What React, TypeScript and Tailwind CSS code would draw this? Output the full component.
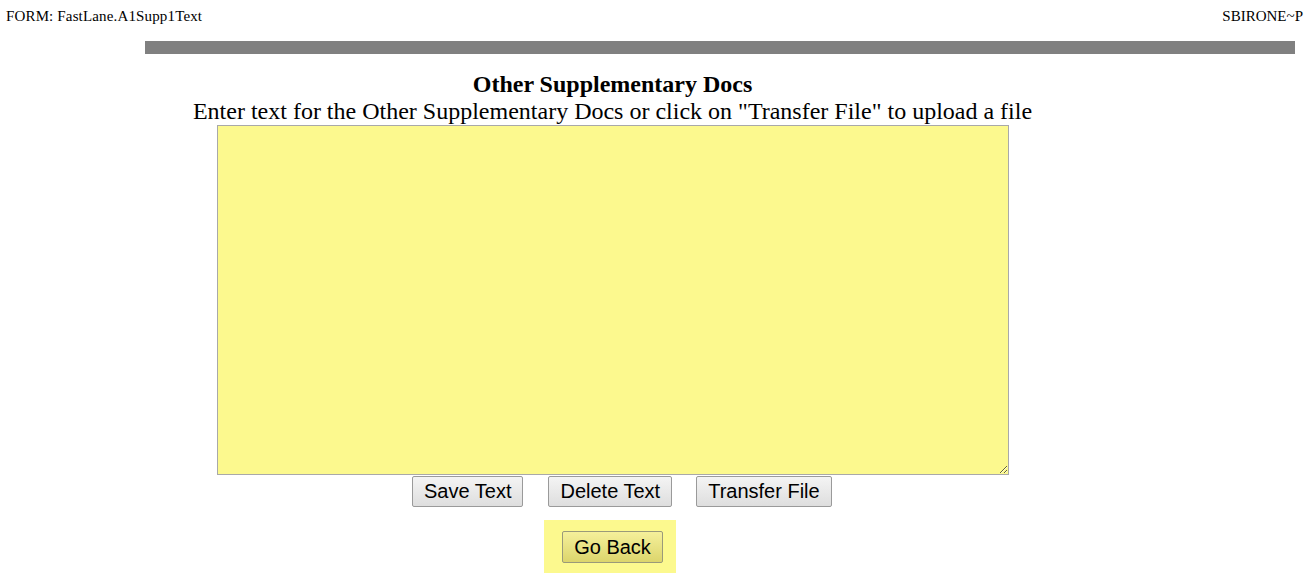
export default function App() {
  return (
    <div className="w-[1305px] h-[573px] overflow-hidden bg-white text-black font-['Liberation_Serif',serif]">
      {/* header line */}
      <div className="flex items-start h-[41px] pt-[8px] text-[15px] leading-[17px]">
        <span className="pl-[6px] whitespace-nowrap tracking-[0.15px]">FORM: FastLane.A1Supp1Text</span>
        <span className="ml-auto whitespace-nowrap pr-[2px]">SBIRONE~P</span>
      </div>
      <div className="ml-[145px] w-[1150px] h-[13px] bg-[#808080]" />

      <div className="w-[1225px] flex flex-col items-center">
        <h1 className="mt-[17px] text-[24px] leading-[27px] font-bold">Other Supplementary Docs</h1>
        <p className="text-[24px] leading-[27px] whitespace-nowrap">
          Enter text for the Other Supplementary Docs or click on "Transfer File" to upload a file
        </p>
        <textarea className="w-[792px] h-[350px] bg-[#fcf98e] border border-[#a9a9a9] resize-y block outline-none" />
      </div>

      <div className="flex pl-[412px] gap-[25px] mt-[1px] font-['Liberation_Sans',Arial,sans-serif] text-[20px]">
        <button className="h-[31px] px-[11px] border border-[#9a9a9a] rounded-[2px] bg-gradient-to-b from-[#f4f4f4] to-[#dedede] leading-[29px]">Save Text</button>
        <button className="h-[31px] px-[11px] border border-[#9a9a9a] rounded-[2px] bg-gradient-to-b from-[#f4f4f4] to-[#dedede] leading-[29px]">Delete Text</button>
        <button className="-ml-[1px] h-[31px] px-[11px] border border-[#9a9a9a] rounded-[2px] bg-gradient-to-b from-[#f4f4f4] to-[#dedede] leading-[29px]">Transfer File</button>
      </div>

      <div className="ml-[544px] mt-[13px] w-[132px] h-[53px] bg-[#fcf98e] pt-[11px] pl-[18px] font-['Liberation_Sans',Arial,sans-serif] text-[20px]">
        <button className="h-[32px] w-[101px] border border-[#9a9a7a] rounded-[2px] bg-gradient-to-b from-[#f5f09a] to-[#dcd56c] leading-[30px]">Go Back</button>
      </div>
    </div>
  );
}
